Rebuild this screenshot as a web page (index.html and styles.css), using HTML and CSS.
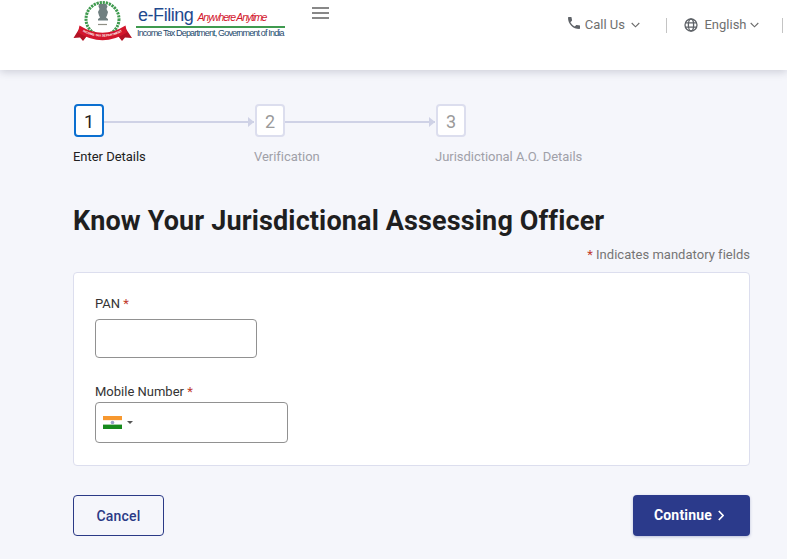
FILE: index.html
```html
<!DOCTYPE html>
<html lang="en">
<head>
<meta charset="utf-8">
<title>Know Your Jurisdictional Assessing Officer</title>
<link rel="stylesheet" href="styles.css">
</head>
<body>
<header class="header">
  <div class="brand">
    <svg class="emblem" width="60" height="44" viewBox="0 0 60 44" aria-hidden="true">
      <defs><path id="ribbon-arc" d="M6 29.500 Q29.500 44 53 29.500"/></defs>
      <circle cx="29.500" cy="19" r="16.500" fill="none" stroke="#3f9a4f" stroke-width="3" stroke-dasharray="2.200 .9"/>
      <circle cx="29.500" cy="19" r="14.500" fill="#fff"/>
      <path d="M26 4h7l1.500 2.500-1 2.500 1.500 3-1 3.500-1 2 2 1.500v1.500h-10v-1.500l2-1.500-1-2-1-3.500 1.500-3-1-2.500z" fill="#6f7f80"/>
      <path d="M25 24.500h9" stroke="#8f8f85" stroke-width="1.200"/>
      <path d="M7 27.500 L0.500 38 L7 37.500 L10 41 L14 36Z M52 27.500 L59 38 L52 37.500 L49 41 L45 36Z" fill="#b31225"/>
      <path d="M6.500 25.500 Q29.500 40 52.500 25.500 L54 32.500 Q29.500 48 5 32.500Z" fill="#d3162c"/>
      <text class="ribbon-text"><textPath href="#ribbon-arc" startOffset="50%" text-anchor="middle">INCOME TAX DEPARTMENT</textPath></text>
    </svg>
    <div class="brand-text">
      <div class="brand-top"><span class="efiling">e-Filing</span><span class="tagline">Anywhere Anytime</span></div>
      <div class="brand-rule"></div>
      <div class="brand-sub">Income Tax Department, Government of India</div>
    </div>
    <svg class="menu" width="17" height="14" viewBox="0 0 17 14" aria-hidden="true">
      <path d="M0 2h17M0 7h17M0 12h17" stroke="#616161" stroke-width="1.600"/>
    </svg>
  </div>
  <nav class="utils">
    <div class="util util-call">
      <svg class="phone" width="16" height="16" viewBox="0 0 24 24" aria-hidden="true"><path fill="#5f6368" d="M6.620 10.790c1.440 2.830 3.760 5.140 6.590 6.590l2.200-2.200c.27-.27.67-.36 1.020-.24 1.120.37 2.330.57 3.570.57.55 0 1 .45 1 1V20c0 .55-.45 1-1 1-9.390 0-17-7.610-17-17 0-.55.45-1 1-1h3.500c.55 0 1 .45 1 1 0 1.250.2 2.450.57 3.570.11.35.03.74-.25 1.020l-2.200 2.200z"/></svg>
      <span>Call Us</span>
      <svg class="chev" width="9" height="6" viewBox="0 0 9 6" aria-hidden="true"><path d="M.7 1l3.800 3.800L8.300 1" fill="none" stroke="#6b6b6b" stroke-width="1.100"/></svg>
    </div>
    <div class="sep"></div>
    <div class="util util-lang">
      <svg width="14" height="14" viewBox="0 0 14 14" aria-hidden="true"><g fill="none" stroke="#5f6368" stroke-width="1.300"><circle cx="7" cy="7" r="6"/><ellipse cx="7" cy="7" rx="2.600" ry="6"/><path d="M1.500 4.800h11M1.500 9.200h11"/></g></svg>
      <span>English</span>
      <svg class="chev" width="9" height="6" viewBox="0 0 9 6" aria-hidden="true"><path d="M.7 1l3.800 3.800L8.300 1" fill="none" stroke="#6b6b6b" stroke-width="1.100"/></svg>
    </div>
    <div class="sep"></div>
  </nav>
</header>

<main class="main">
  <ol class="steps">
    <li class="step step-active">
      <div class="step-track"><div class="step-box">1</div><div class="step-line"></div></div>
      <div class="step-label">Enter Details</div>
    </li>
    <li class="step">
      <div class="step-track"><div class="step-box">2</div><div class="step-line"></div></div>
      <div class="step-label">Verification</div>
    </li>
    <li class="step step-last">
      <div class="step-track"><div class="step-box">3</div></div>
      <div class="step-label">Jurisdictional A.O. Details</div>
    </li>
  </ol>

  <h1 class="title">Know Your Jurisdictional Assessing Officer</h1>
  <p class="mandatory"><span class="req">*</span> Indicates mandatory fields</p>

  <section class="card">
    <label class="label label-pan">PAN <span class="req">*</span></label>
    <div class="input input-pan"></div>
    <label class="label label-mobile">Mobile Number <span class="req">*</span></label>
    <div class="input input-mobile">
      <svg width="19" height="13" viewBox="0 0 19 13" aria-hidden="true">
        <rect width="19" height="4.400" fill="#f7982f"/>
        <rect y="4.400" width="19" height="4.200" fill="#fff"/>
        <rect y="8.600" width="19" height="4.400" fill="#178a1c"/>
        <circle cx="9.500" cy="6.500" r="1.800" fill="#9aa3c9"/>
      </svg>
      <span class="caret"></span>
    </div>
  </section>

  <div class="actions">
    <button class="btn btn-cancel" type="button">Cancel</button>
    <button class="btn btn-continue" type="button">Continue
      <svg width="6" height="11" viewBox="0 0 6 11" aria-hidden="true"><path d="M.8 1l4.300 4.500L.8 10" fill="none" stroke="#fff" stroke-width="1.700"/></svg>
    </button>
  </div>
</main>
</body>
</html>
```
FILE: styles.css
```css
* { box-sizing: border-box; }
html, body { margin: 0; padding: 0; }
body {
  width: 787px;
  height: 559px;
  overflow: hidden;
  background: #f5f6fb;
  font-family: Roboto, "Liberation Sans", sans-serif;
  color: #1f1f1f;
}
.header {
  height: 70px;
  background: #fff;
  box-shadow: 0 2px 8px rgba(60, 64, 90, .22);
  display: flex;
  justify-content: space-between;
  padding-left: 73px;
}
.brand { display: flex; align-items: flex-start; }
.emblem { flex: none; overflow: visible; }
.ribbon-text { font-family: "Liberation Sans", sans-serif; font-size: 3.100px; font-weight: 700; fill: #fff; }
.brand-text { margin-left: 3px; width: 152px; font-family: "Liberation Sans", sans-serif; }
.brand-top { display: flex; align-items: flex-end; height: 26px; padding-left: 2px; }
.efiling { font-size: 18px; line-height: 21px; color: #1f4a8e; letter-spacing: -.45px; }
.tagline { font-size: 10.500px; line-height: 17px; font-style: italic; color: #d3162c; margin-left: 4px; letter-spacing: -1.150px; white-space: nowrap; }
.brand-rule { height: 2px; background: #3f9a4f; width: 149px; }
.brand-sub { font-size: 9px; line-height: 11px; color: #1f4a6e; white-space: nowrap; padding-left: 1px; letter-spacing: -.84px; }
.menu { margin: 6px 0 0 24px; }
.utils { display: flex; align-items: flex-start; padding-top: 16px; font-size: 13px; color: #6f6f6f; }
.util { display: flex; align-items: center; height: 17px; }
.util-call { gap: 3px; }
.phone { margin-top: -3px; }
.util-call .chev { margin-left: 3px; }
.util-lang { gap: 6px; }
.util-lang .chev { margin-left: -3px; }
.sep { width: 1.500px; height: 15px; margin-top: 2px; background: #c4c4c4; }
.util-call + .sep { margin-left: 26px; margin-right: 17px; }
.util-lang + .sep { margin-left: 23px; margin-right: 4px; }
.main { padding: 33px 37px 0 73px; }
.steps { list-style: none; margin: 0; padding: 0; display: flex; }
.step { width: 181px; }
.step-last { width: 200px; }
.step-track { display: flex; align-items: center; height: 34px; padding-left: 1px; }
.step-box {
  width: 30px;
  height: 33px;
  flex: none;
  display: flex;
  align-items: center;
  justify-content: center;
  background: #fff;
  border: 2px solid #dcdeee;
  border-radius: 4px;
  font-size: 18px;
  padding-top: 2px;
  color: #9a9a9a;
}
.step-active .step-box { border-color: #0b6fd0; color: #222; }
.step-line { width: 150px; height: 2px; margin-top: 4px; background: #cfd2e6; position: relative; }
.step-line::after {
  content: "";
  position: absolute;
  right: 0;
  top: -4px;
  border-left: 6px solid #cfd2e6;
  border-top: 5px solid transparent;
  border-bottom: 5px solid transparent;
}
.step-label { font-size: 13px; line-height: 16px; margin-top: 12px; color: #a0a0a8; letter-spacing: -.03px; white-space: nowrap; }
.step-active .step-label { color: #212121; }
.title { font-size: 27px; line-height: 32px; font-weight: 700; margin: 40px 0 0; color: #1f1f1f; letter-spacing: .14px; white-space: nowrap; }
.mandatory { margin: 10px 0 0; font-size: 13px; line-height: 16px; text-align: right; color: #757575; letter-spacing: .02px; }
.req { color: #c0392b; }
.card {
  margin-top: 9px;
  height: 194px;
  background: #fff;
  border: 1px solid #dcdeee;
  border-radius: 4px;
  padding: 23px 21px 0;
}
.label { display: block; font-size: 13px; line-height: 16px; color: #333; }
.input { background: #fff; border: 1px solid #919191; border-radius: 4px; }
.input-pan { width: 162px; height: 39px; margin-top: 7px; }
.label-mobile { margin-top: 26px; }
.input-mobile { width: 193px; height: 41px; margin-top: 2px; display: flex; align-items: center; padding-left: 7px; }
.caret { margin-left: 5px; border-top: 3px solid #555; border-left: 3px solid transparent; border-right: 3px solid transparent; }
.actions { display: flex; justify-content: space-between; margin-top: 29px; }
.btn { height: 41px; border-radius: 4px; font-family: inherit; font-size: 14px; letter-spacing: .2px; font-weight: 500; padding: 0; }
.btn-cancel { width: 91px; background: transparent; border: 1px solid #2b3a86; color: #2b3a86; }
.btn-continue {
  width: 117px;
  background: #2b3a8b;
  border: 0;
  color: #fff;
  display: flex;
  align-items: center;
  justify-content: center;
  gap: 6px;
  padding-right: 5px;
  padding-bottom: 1px;
  font-weight: 700;
  box-shadow: 0 1px 3px rgba(43, 58, 139, .3);
}
```
